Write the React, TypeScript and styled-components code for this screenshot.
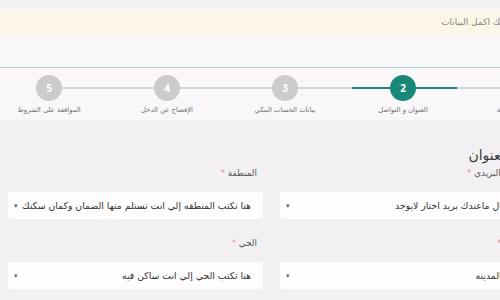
import styled, { createGlobalStyle } from 'styled-components';

const GlobalStyle = createGlobalStyle`
  html, body {
    margin: 0;
    padding: 0;
    overflow: hidden;
    background: #f3f0f3;
  }
  body {
    font-family: "DejaVu Sans", "Noto Sans", sans-serif;
  }
`;

const steps = [
  { n: 1, title: 'البيانات الشخصية' },
  { n: 2, title: 'العنوان و التواصل' },
  { n: 3, title: 'بيانات الحساب البنكي' },
  { n: 4, title: 'الإفصاح عن الدخل' },
  { n: 5, title: 'الموافقة على الشروط' },
];

const fields = [
  { label: 'العنوان البريدي', value: 'في حال ماعندك بريد اختار لايوجد' },
  { label: 'المنطقة', value: 'هنا تكتب المنطقه إلي انت تستلم منها الضمان وكمان سكنك' },
  { label: 'المدينة', value: 'اختار المدينه' },
  { label: 'الحي', value: 'هنا تكتب الحي إلي انت ساكن فيه' },
];

const App = () => {
  const current = 2;
  return (
    <>
      <GlobalStyle />
      <Page>
        <Alert>من فضلك اكمل البيانات</Alert>
        <StepperCard>
          <Steps>
            {steps.map((s) => (
              <Step key={s.n} $active={s.n === current}>
                <Circle $active={s.n === current}>{s.n}</Circle>
                <StepTitle>{s.title}</StepTitle>
              </Step>
            ))}
          </Steps>
        </StepperCard>
        <FormSection>
          <Heading>العنوان</Heading>
          <FieldGrid>
            {fields.map((f) => (
              <Field key={f.label}>
                <Label>
                  {f.label} <Required>*</Required>
                </Label>
                <Select>
                  <span>{f.value}</span>
                  <Caret>▾</Caret>
                </Select>
              </Field>
            ))}
          </FieldGrid>
        </FormSection>
      </Page>
    </>
  );
};

export default App;

const Page = styled.div`
  width: 600px;
  height: 300px;
  margin-left: -10px;
  direction: rtl;
  display: flex;
  flex-direction: column;
  background: #f3f0f3;
`;

const Alert = styled.div`
  margin-top: 8px;
  height: 28px;
  padding-right: 60px;
  display: flex;
  align-items: center;
  background: #fcf6ea;
  color: #8a8784;
  font-size: 9px;
`;

const StepperCard = styled.div`
  padding-top: 31px;
  background: #f9f7fa;
`;

const Steps = styled.ol`
  list-style: none;
  margin: 0;
  padding: 7px 10px 5px 0;
  border-top: 1px solid #a9d7cd;
  display: grid;
  grid-template-columns: repeat(5, 118px);
`;

const Step = styled.li<{ $active: boolean }>`
  position: relative;
  display: flex;
  flex-direction: column;
  align-items: center;

  &::before {
    content: '';
    position: absolute;
    top: 12px;
    left: 0;
    right: 0;
    height: 2px;
    background: #d6d4d7;
  }
  &:first-child::before {
    right: 50%;
  }
  &:last-child::before {
    left: 50%;
  }
  &::after {
    content: '';
    display: ${(p) => (p.$active ? 'block' : 'none')};
    position: absolute;
    top: 12px;
    left: 8px;
    right: 5px;
    height: 2px;
    background: #1a8878;
  }
`;

const Circle = styled.div<{ $active: boolean }>`
  position: relative;
  z-index: 1;
  width: 26px;
  height: 26px;
  border-radius: 50%;
  display: flex;
  align-items: center;
  justify-content: center;
  background: ${(p) => (p.$active ? '#1a8878' : '#cdcbce')};
  color: #fff;
  font-family: "Open Sans", "DejaVu Sans", sans-serif;
  font-size: 10px;
  font-weight: 700;
`;

const StepTitle = styled.div`
  margin-top: 4px;
  line-height: 10px;
  font-size: 6.8px;
  color: #6f6f6f;
  white-space: nowrap;
`;

const FormSection = styled.div`
  flex: 1;
  padding: 25px 55px 0 18px;
`;

const Heading = styled.h2`
  margin: 0 26px 2px 0;
  line-height: 20px;
  font-size: 14px;
  font-weight: 400;
  color: #3b3b3b;
`;

const FieldGrid = styled.div`
  display: grid;
  grid-template-columns: 255px 255px;
  column-gap: 17px;
  row-gap: 18px;
`;

const Field = styled.div`
  display: flex;
  flex-direction: column;
`;

const Label = styled.label`
  padding-right: 6px;
  margin-bottom: 13px;
  line-height: 12px;
  font-size: 8.8px;
  color: #555;
`;

const Required = styled.span`
  color: #ef8c9c;
`;

const Select = styled.div`
  height: 27px;
  box-sizing: border-box;
  padding: 0 12px 0 6px;
  display: flex;
  align-items: center;
  justify-content: space-between;
  background: #fefdfe;
  border-radius: 3px;
  font-size: 9.3px;
  color: #2f2f2f;
  white-space: nowrap;
  overflow: hidden;
`;

const Caret = styled.span`
  font-size: 7px;
  color: #666;
`;
